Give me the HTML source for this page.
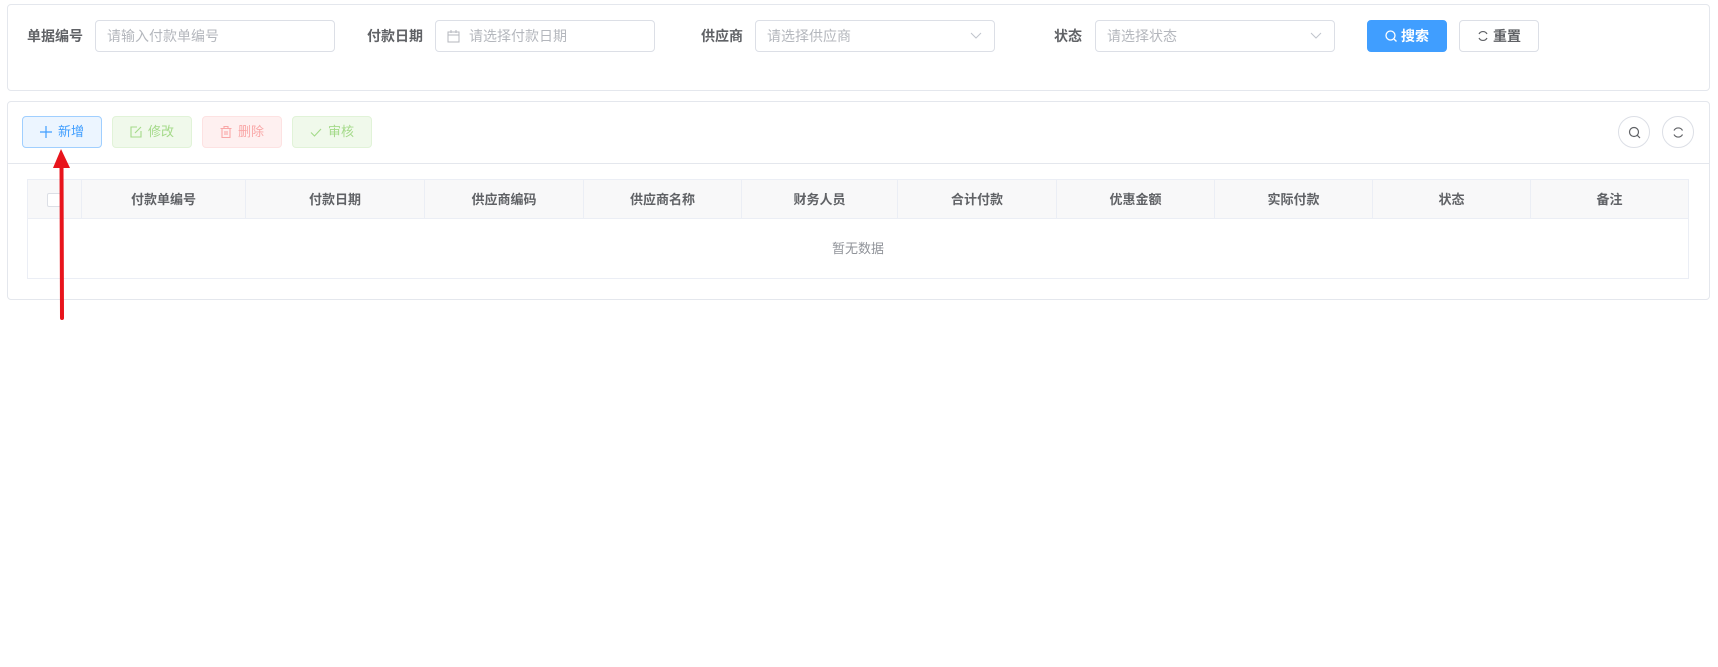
<!DOCTYPE html>
<html><head><meta charset="utf-8"><style>
*{box-sizing:border-box;margin:0;padding:0}
body{width:1718px;height:667px;background:#fff;font-family:"Liberation Sans","Noto Sans CJK SC",sans-serif;position:relative;overflow:hidden;color:#606266}
.abs{position:absolute}
.card{position:absolute;border:1px solid #e4e7ed;border-radius:4px;background:#fff}
.lbl{position:absolute;font-size:14px;font-weight:bold;color:#606266;top:27px;line-height:18px}
.inp{position:absolute;top:20px;height:32px;border:1px solid #dcdfe6;border-radius:4px;font-size:14px;color:#b4b7bd;line-height:30px;padding-left:11px}
.btn{position:absolute;height:32px;border-radius:4px;font-size:13px;line-height:30px;text-align:center;border:1px solid}
.btn svg{vertical-align:-2px;margin-right:6px}
.th{position:absolute;top:0;height:39px;line-height:39px;text-align:center;font-size:13px;font-weight:bold;color:#606266;border-right:1px solid #ebeef5}
</style></head><body>
<div class="card" style="left:7px;top:4px;width:1703px;height:87px"></div>
<div class="lbl" style="left:27px">单据编号</div>
<div class="inp" style="left:95px;width:240px">请输入付款单编号</div>
<div class="lbl" style="left:367px">付款日期</div>
<div class="inp" style="left:435px;width:220px;padding-left:33px">请选择付款日期
<svg class="abs" style="left:11px;top:9px" width="13" height="13" viewBox="0 0 13 13"><rect x="1" y="2" width="11" height="10" fill="none" stroke="#b4b7bd"/><line x1="1" y1="5" x2="12" y2="5" stroke="#b4b7bd"/><line x1="4" y1="0" x2="4" y2="3" stroke="#b4b7bd"/><line x1="9" y1="0" x2="9" y2="3" stroke="#b4b7bd"/></svg></div>
<div class="lbl" style="left:701px">供应商</div>
<div class="inp" style="left:755px;width:240px">请选择供应商<svg class="abs" style="right:12px;top:11px" width="12" height="8"><path d="M1 1l5 5 5-5" fill="none" stroke="#c0c4cc"/></svg></div>
<div class="lbl" style="left:1054px">状态</div>
<div class="inp" style="left:1095px;width:240px">请选择状态<svg class="abs" style="right:12px;top:11px" width="12" height="8"><path d="M1 1l5 5 5-5" fill="none" stroke="#c0c4cc"/></svg></div>
<div class="btn" style="left:1367px;top:20px;width:80px;background:#409eff;border-color:#409eff;color:#fff;font-weight:bold;font-size:14px"><svg width="12" height="12" style="vertical-align:-1px;margin-right:4px"><circle cx="5.5" cy="5.5" r="4.5" fill="none" stroke="#fff" stroke-width="1.3"/><line x1="9" y1="9" x2="11.5" y2="11.5" stroke="#fff" stroke-width="1.3"/></svg>搜索</div>
<div class="btn" style="left:1459px;top:20px;width:80px;background:#fff;border-color:#dcdfe6;color:#606266;font-weight:bold;font-size:14px"><svg width="12" height="12" style="vertical-align:-1px;margin-right:4px"><path d="M10 4A4.5 4.5 0 0 0 2 4M2 8a4.5 4.5 0 0 0 8 0" fill="none" stroke="#606266" stroke-width="1.2"/></svg>重置</div>

<div class="card" style="left:7px;top:101px;width:1703px;height:199px"></div>
<div class="btn" style="left:22px;top:116px;width:80px;background:#ecf5ff;border-color:#a0cfff;color:#409eff"><svg width="12" height="12"><path d="M6 0v12M0 6h12" stroke="#409eff" stroke-width="1.2"/></svg>新增</div>
<div class="btn" style="left:112px;top:116px;width:80px;background:#f0f9eb;border-color:#e1f3d8;color:#a4da89"><svg width="12" height="12"><path d="M7 1H1v10h10V5" fill="none" stroke="#a4da89" stroke-width="1.1"/><path d="M5 7l6-6" stroke="#a4da89" stroke-width="1.1"/></svg>修改</div>
<div class="btn" style="left:202px;top:116px;width:80px;background:#fef0f0;border-color:#fde2e2;color:#f9a7a7"><svg width="12" height="12"><path d="M0.5 2.5h11M4 2.5V0.5h4v2M2 2.5v9h8v-9M5 5v4M7 5v4" fill="none" stroke="#f9a7a7" stroke-width="1.1"/></svg>删除</div>
<div class="btn" style="left:292px;top:116px;width:80px;background:#f0f9eb;border-color:#e1f3d8;color:#a4da89"><svg width="12" height="12"><path d="M1 6.5l3.5 3.5L11 3" fill="none" stroke="#a4da89" stroke-width="1.1"/></svg>审核</div>
<div class="abs" style="left:1618px;top:116px;width:32px;height:32px;border:1px solid #dcdfe6;border-radius:50%"><svg class="abs" style="left:9px;top:9px" width="13" height="13"><circle cx="6" cy="6" r="4.5" fill="none" stroke="#606266" stroke-width="1.2"/><line x1="9.3" y1="9.3" x2="12" y2="12" stroke="#606266" stroke-width="1.2"/></svg></div>
<div class="abs" style="left:1662px;top:116px;width:32px;height:32px;border:1px solid #dcdfe6;border-radius:50%"><svg class="abs" style="left:9px;top:9px" width="13" height="13"><path d="M10.5 4.5A4.8 4.8 0 0 0 2 4.5M2 8.5a4.8 4.8 0 0 0 8.5 0" fill="none" stroke="#606266" stroke-width="1.2"/></svg></div>
<div class="abs" style="left:8px;top:163px;width:1701px;height:1px;background:#e4e7ed"></div>

<div class="abs" style="left:27px;top:179px;width:1662px;height:100px;border:1px solid #ebeef5">
<div class="abs" style="left:0;top:0;width:1660px;height:39px;background:#f8f8f9;border-bottom:1px solid #ebeef5"></div>
<div class="th" style="left:0;width:54px"><div class="abs" style="left:19px;top:13px;width:14px;height:14px;border:1px solid #dcdfe6;border-radius:2px;background:#fff"></div></div>
<div class="th" style="left:54px;width:164px">付款单编号</div>
<div class="th" style="left:218px;width:179px">付款日期</div>
<div class="th" style="left:397px;width:159px">供应商编码</div>
<div class="th" style="left:556px;width:158px">供应商名称</div>
<div class="th" style="left:714px;width:156px">财务人员</div>
<div class="th" style="left:870px;width:159px">合计付款</div>
<div class="th" style="left:1029px;width:158px">优惠金额</div>
<div class="th" style="left:1187px;width:158px">实际付款</div>
<div class="th" style="left:1345px;width:158px">状态</div>
<div class="th" style="left:1503px;width:157px;border-right:none">备注</div>
<div class="abs" style="left:0;top:39px;width:1660px;height:59px;line-height:59px;text-align:center;font-size:13px;color:#909399">暂无数据</div>
</div>

<svg class="abs" style="left:0;top:0" width="120" height="330"><line x1="62" y1="318" x2="61.5" y2="164" stroke="#e8141c" stroke-width="4" stroke-linecap="round"/><path d="M61 149L53 168L70 168Z" fill="#e8141c"/></svg>
</body></html>
